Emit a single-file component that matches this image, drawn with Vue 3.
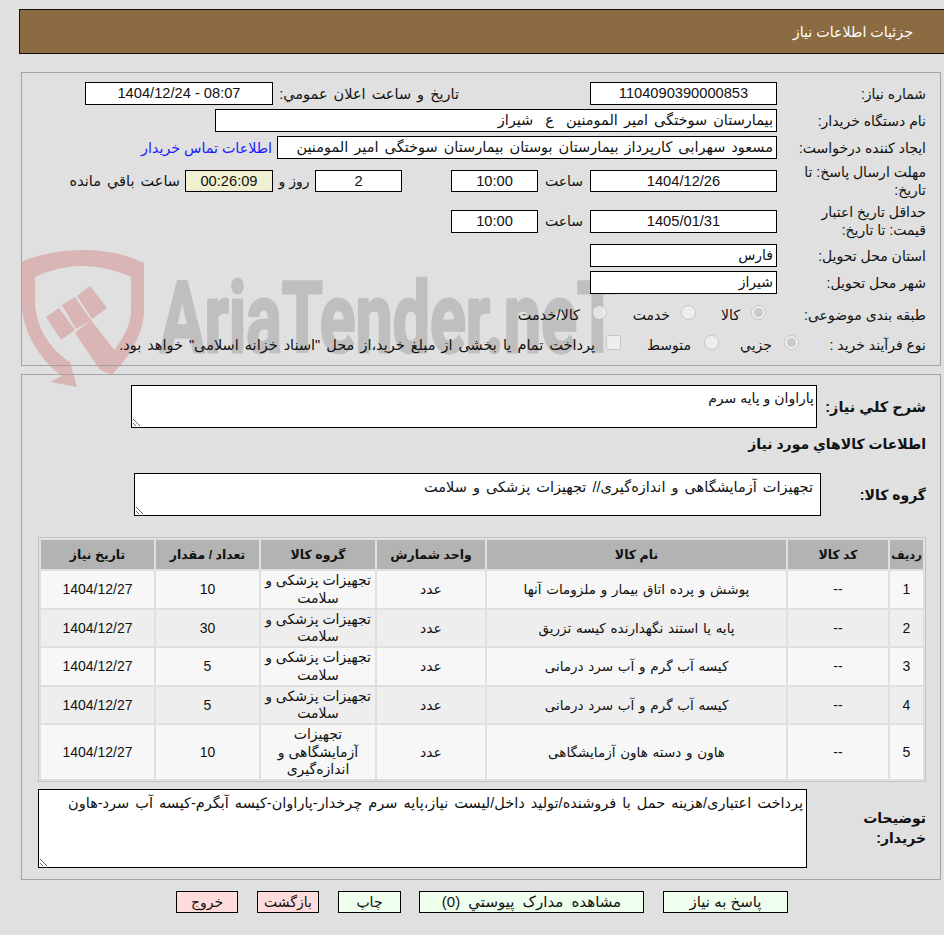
<script setup>
const items = [
  { id: 1, name: "پوشش و پرده اتاق بیمار و ملزومات آنها", group: "تجهیزات پزشکی و سلامت", qty: 10 },
  { id: 2, name: "پایه یا استند نگهدارنده کیسه تزریق", group: "تجهیزات پزشکی و سلامت", qty: 30 },
  { id: 3, name: "کیسه آب گرم و آب سرد درمانی", group: "تجهیزات پزشکی و سلامت", qty: 5 },
  { id: 4, name: "کیسه آب گرم و آب سرد درمانی", group: "تجهیزات پزشکی و سلامت", qty: 5 },
  { id: 5, name: "هاون و دسته هاون آزمایشگاهی", group: "تجهیزات آزمایشگاهی و اندازه‌گیری", qty: 10 },
];
</script>

<template>
  <div class="page" dir="rtl">
    <!-- site watermark, sits behind everything -->
    <svg class="watermark" width="640" height="400" viewBox="0 0 640 400">
      <path class="mark" d="M21 262C40 254 60 250 82 250C105 250 125 254 144 263V310C144 335 128 358 112 375L104 362C118 346 131 330 131 310V277C115 270 100 266 82 266C65 266 50 270 35 277V300C35 326 50 350 70 362L77 387L50 382L62 376C40 360 22 332 21 300Z" />
      <path class="mark" d="M77 296L90 286L107 308L92 319ZM62 305L75 297L91 320L76 329ZM46 317L59 308L75 330L61 340ZM75 333L91 320L122 360L112 375L100 370Z" />
      <text class="brand" x="160" y="352" textLength="458" lengthAdjust="spacingAndGlyphs">AriaTender.neT</text>
    </svg>

    <header class="page-title">جزئیات اطلاعات نیاز</header>

    <section class="panel info">
      <div class="row">
        <label class="lbl">شماره نیاز:</label>
        <div class="box w187 center">1104090390000853</div>
        <label class="public-lbl sp">تاریخ و ساعت اعلان عمومي:</label>
        <div class="box w188 center" dir="ltr">1404/12/24 - 08:07</div>
      </div>
      <div class="row">
        <label class="lbl">نام دستگاه خریدار:</label>
        <div class="box w562 sp">بیمارستان سوختگی امیر المومنین &nbsp;ع &nbsp;شیراز</div>
      </div>
      <div class="row">
        <label class="lbl">ایجاد کننده درخواست:</label>
        <div class="box w500 sp">مسعود سهرابی کارپرداز بیمارستان بوستان بیمارستان سوختگی امیر المومنین</div>
        <a class="contact">اطلاعات تماس خریدار</a>
      </div>
      <div class="row tall deadline">
        <label class="lbl">مهلت ارسال پاسخ: تا<br />تاریخ:</label>
        <div class="box w187 center">1404/12/26</div>
        <span class="hour">ساعت</span>
        <div class="box w87 center">10:00</div>
        <div class="box w87 center days">2</div>
        <span class="and">روز و</span>
        <div class="box w88 center timer">00:26:09</div>
        <span class="left sp">ساعت باقي مانده</span>
      </div>
      <div class="row tall validity">
        <label class="lbl">حداقل تاریخ اعتبار<br />قیمت: تا تاریخ:</label>
        <div class="box w187 center">1405/01/31</div>
        <span class="hour">ساعت</span>
        <div class="box w87 center">10:00</div>
      </div>
      <div class="row">
        <label class="lbl">استان محل تحویل:</label>
        <div class="box w187">فارس</div>
      </div>
      <div class="row">
        <label class="lbl">شهر محل تحویل:</label>
        <div class="box w187">شیراز</div>
      </div>
      <div class="row options subject">
        <label class="lbl">طبقه بندی موضوعی:</label>
        <input class="first-opt" type="radio" disabled checked />
        <span class="opt-kala">کالا</span>
        <input type="radio" disabled />
        <span class="opt-service">خدمت</span>
        <input type="radio" disabled />
        <span class="opt-both">کالا/خدمت</span>
      </div>
      <div class="row options process">
        <label class="lbl">نوع فرآیند خرید :</label>
        <input type="radio" disabled checked />
        <span class="opt-small">جزيي</span>
        <input type="radio" disabled />
        <span class="opt-mid">متوسط</span>
        <input type="checkbox" disabled />
        <span class="opt-pay sp">پرداخت تمام یا بخشی از مبلغ خرید،از محل "اسناد خزانه اسلامی" خواهد بود.</span>
      </div>
    </section>

    <section class="panel details">
      <div class="summary">
        <label class="bold-lbl">شرح کلي نیاز:</label>
        <textarea class="area summary-area" readonly>پاراوان و پایه سرم</textarea>
      </div>
      <h3 class="goods-title">اطلاعات کالاهاي مورد نیاز</h3>
      <div class="group">
        <label class="bold-lbl">گروه کالا:</label>
        <textarea class="area group-area sp" readonly>تجهیزات آزمایشگاهی و اندازه‌گیری// تجهیزات پزشکی و سلامت</textarea>
      </div>

      <table class="goods">
        <thead>
          <tr>
            <th class="c-row">ردیف</th>
            <th class="c-code">کد کالا</th>
            <th class="c-name">نام کالا</th>
            <th class="c-unit">واحد شمارش</th>
            <th class="c-group">گروه کالا</th>
            <th class="c-qty">تعداد / مقدار</th>
            <th class="c-date">تاریخ نیاز</th>
          </tr>
        </thead>
        <tbody>
          <tr v-for="item in items" :key="item.id">
            <td>{{ item.id }}</td>
            <td>--</td>
            <td class="name-cell">{{ item.name }}</td>
            <td>عدد</td>
            <td>{{ item.group }}</td>
            <td>{{ item.qty }}</td>
            <td>1404/12/27</td>
          </tr>
        </tbody>
      </table>

      <div class="notes">
        <label class="bold-lbl notes-lbl">توضیحات<br />خریدار:</label>
        <textarea class="area notes-area sp" readonly>پرداخت اعتباری/هزینه حمل با فروشنده/تولید داخل/لیست نیاز،پایه سرم چرخدار-پاراوان-کیسه آبگرم-کیسه آب سرد-هاون</textarea>
      </div>
    </section>

    <div class="actions">
      <button class="btn ok reply">پاسخ به نیاز</button>
      <button class="btn ok docs">مشاهده مدارک پیوستي (0)</button>
      <button class="btn ok print">چاپ</button>
      <button class="btn no">بازگشت</button>
      <button class="btn no">خروج</button>
    </div>
  </div>
</template>

<style>
html,
body {
  margin: 0;
  background: #e0e0e0;
}
</style>

<style scoped>
.page {
  position: relative;
  width: 944px;
  height: 935px;
  overflow: hidden;
  padding-top: 9px;
  box-sizing: border-box;
  background: #e0e0e0;
  color: #111;
  font-family: "Liberation Sans", "DejaVu Sans", sans-serif;
  font-size: 14px;
}
.watermark {
  position: absolute;
  left: 0;
  top: 0;
  direction: ltr;
}
.mark {
  fill: #d9b5b5;
}
.brand {
  font-family: "Roboto", sans-serif;
  font-weight: 700;
  font-size: 98px;
  fill: #bfbfbf;
  stroke: #bfbfbf;
  stroke-width: 3px;
  stroke-linejoin: round;
}
.sp {
  font-size: 14.5px;
  word-spacing: 2px;
}
.page-title {
  position: relative;
  height: 42px;
  margin-left: 19px;
  padding: 1px 31px 0 0;
  line-height: 43px;
  font-size: 14.25px;
  background: #8b6b42;
  border: 1px solid #111;
  border-right: 0;
  color: #fff;
}
.panel {
  position: relative;
  margin-left: 21px;
  margin-right: 3px;
  padding-right: 14px;
  border: 1px solid #a3a3a3;
}
.info {
  margin-top: 18px;
  height: 294px;
  box-sizing: border-box;
  padding-top: 9px;
}
.row {
  display: flex;
  align-items: center;
  height: 23px;
  margin-bottom: 4px;
}
.lbl {
  width: 149px;
  flex: none;
}
.box {
  box-sizing: border-box;
  height: 23px;
  line-height: 21px;
  padding: 0 3px;
  background: #fff;
  border: 1px solid #000;
  white-space: nowrap;
  overflow: hidden;
  flex: none;
}
.center {
  text-align: center;
  font-size: 14.67px;
}
.w187 {
  width: 187px;
}
.w188 {
  width: 188px;
}
.w87 {
  width: 87px;
}
.w88 {
  width: 88px;
}
.w500 {
  width: 500px;
}
.w562 {
  width: 562px;
}
.public-lbl {
  margin-right: 131px;
  width: 186px;
  flex: none;
  white-space: nowrap;
}
.contact {
  margin-right: 5px;
  color: #1a1aff;
  font-size: 14.25px;
}
.tall {
  height: 36px;
}
.tall .lbl {
  line-height: 18px;
}
.deadline .box {
  height: 22px;
  line-height: 20px;
}
.validity {
  margin-bottom: 5px;
}
.hour {
  width: 52px;
  text-align: center;
  flex: none;
}
.days {
  margin-right: 49px;
}
.and {
  width: 42px;
  text-align: center;
  flex: none;
}
.timer {
  background: #f0f0d2;
}
.left {
  margin-right: 5px;
  white-space: nowrap;
}
.options input {
  flex: none;
  width: 15px;
  height: 15px;
  margin: 0 0 4px;
}
.options .first-opt {
  margin-right: 11px;
}
.options span {
  flex: none;
  white-space: nowrap;
}
.subject {
  margin-top: 9px;
}
.process {
  margin-top: 7px;
}
.process .lbl {
  width: 127px;
}
.opt-kala {
  width: 44px;
  margin-right: 11px;
}
.opt-service {
  width: 63px;
  margin-right: 11px;
}
.opt-both {
  margin-right: 12px;
  font-size: 14.5px;
}
.opt-small {
  width: 53px;
  margin-right: 12px;
}
.opt-mid {
  width: 70px;
  margin-right: 13px;
}
.opt-pay {
  margin-right: 11px;
}
.details {
  margin-top: 8px;
  height: 506px;
  box-sizing: border-box;
  padding-top: 10px;
}
.bold-lbl {
  font-weight: 700;
  flex: none;
}
.summary,
.group,
.notes {
  display: flex;
  align-items: center;
}
.summary .bold-lbl {
  width: 109px;
  font-size: 14.5px;
}
.group .bold-lbl {
  width: 105px;
}
.area {
  display: block;
  box-sizing: border-box;
  margin: 0;
  padding: 4px 2px 2px;
  background: #fff;
  border: 1px solid #000;
  color: #111;
  font-family: inherit;
  outline: 0;
  resize: both;
}
.summary-area {
  width: 686px;
  height: 43px;
  font-size: 14px;
}
.goods-title {
  margin: 6px 0 0;
  height: 22px;
  font-size: 14px;
  line-height: 20px;
}
.group {
  margin-top: 17px;
}
.group-area {
  width: 687px;
  height: 43px;
  padding: 5px 7px 2px;
}
.goods {
  width: 887px;
  margin: 21px 0 0 1px;
  table-layout: fixed;
  border-collapse: separate;
  border-spacing: 2px;
  border: 1px solid #c4c4c4;
  font-size: 14px;
}
.goods th {
  height: 29px;
  padding: 0;
  background: #b3b3b3;
  font-size: 12.5px;
}
.goods .c-row {
  font-size: 11.5px;
}
.goods td {
  padding: 1px 2px 0;
  height: 35.5px;
  background: #f7f7f7;
  text-align: center;
  line-height: 17.5px;
}
.goods tbody tr:nth-child(even) td {
  background: #eeeeee;
}
.goods .name-cell {
  font-size: 13.5px;
  word-spacing: 1px;
}
.c-row {
  width: 33px;
}
.c-code {
  width: 100px;
}
.c-name {
  width: 299px;
}
.c-unit {
  width: 108px;
}
.c-group {
  width: 114px;
}
.c-qty {
  width: 103px;
}
.c-date {
  width: 113px;
}
.notes {
  margin-top: 7px;
}
.notes-lbl {
  width: 119px;
  line-height: 20px;
}
.notes-area {
  width: 769px;
  height: 79px;
  padding: 5px 3px 2px;
}
.actions {
  display: flex;
  position: relative;
  margin-top: 11px;
  padding-right: 156px;
  gap: 19px;
}
.btn {
  box-sizing: border-box;
  height: 22px;
  width: 62px;
  padding: 0;
  border: 1px solid #000;
  color: #111;
  font: inherit;
}
.ok {
  background: #eeffee;
}
.no {
  background: #ffdbdb;
}
.reply {
  width: 125px;
  font-size: 15px;
}
.docs {
  width: 225px;
  font-size: 15px;
  word-spacing: 4px;
}
.print {
  width: 63px;
  margin-right: -1px;
}
</style>
